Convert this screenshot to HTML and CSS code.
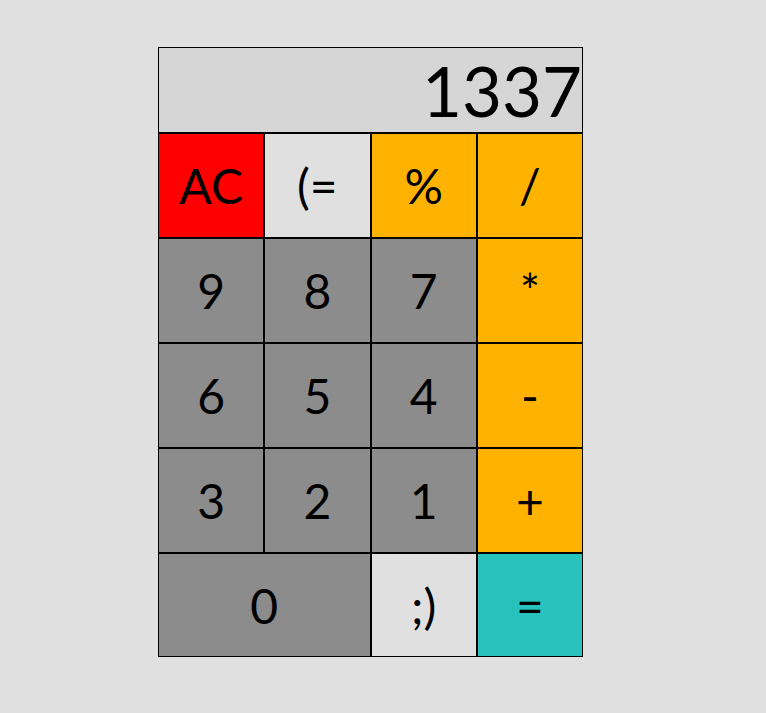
FILE: index.html
```html
<!DOCTYPE html>
<html>
<head>
<meta charset="utf-8">
<link rel="stylesheet" href="styles.css">
</head>
<body>
<div class="calc">
  <div class="display">1337</div>
  <div class="keys">
    <div class="key red">AC</div>
    <div class="key light">(=</div>
    <div class="key orange">%</div>
    <div class="key orange">/</div>
    <div class="key gray">9</div>
    <div class="key gray">8</div>
    <div class="key gray">7</div>
    <div class="key orange">*</div>
    <div class="key gray">6</div>
    <div class="key gray">5</div>
    <div class="key gray">4</div>
    <div class="key orange">-</div>
    <div class="key gray">3</div>
    <div class="key gray">2</div>
    <div class="key gray">1</div>
    <div class="key orange">+</div>
    <div class="key gray wide">0</div>
    <div class="key light">;)</div>
    <div class="key teal">=</div>
  </div>
</div>
</body>
</html>
```
FILE: styles.css
```css
html, body {
  background: #e0e0e0;
}
body {
  margin: 8px;
  font-family: Lato, "Open Sans", sans-serif;
}
.calc {
  width: 425px;
  margin: 39px 0 0 150px;
}
.display {
  box-sizing: border-box;
  height: 86px;
  border: 1px solid #000;
  background: #d6d6d6;
  display: flex;
  align-items: center;
  justify-content: flex-end;
  font-size: 69px;
  line-height: 1;
  color: #000;
  padding-right: 0;
}
.keys {
  display: grid;
  grid-template-columns: repeat(4, 106.25px);
  grid-auto-rows: 104.9px;
}
.key {
  box-sizing: border-box;
  border: 1px solid #000;
  display: flex;
  align-items: center;
  justify-content: center;
  font-size: 48px;
  color: #000;
}
.wide { grid-column: span 2; }
.red { background: #ff0000; }
.light { background: #e0e0e0; }
.orange { background: #ffb300; }
.gray { background: #8c8c8c; }
.teal { background: #26c2bb; }
```
